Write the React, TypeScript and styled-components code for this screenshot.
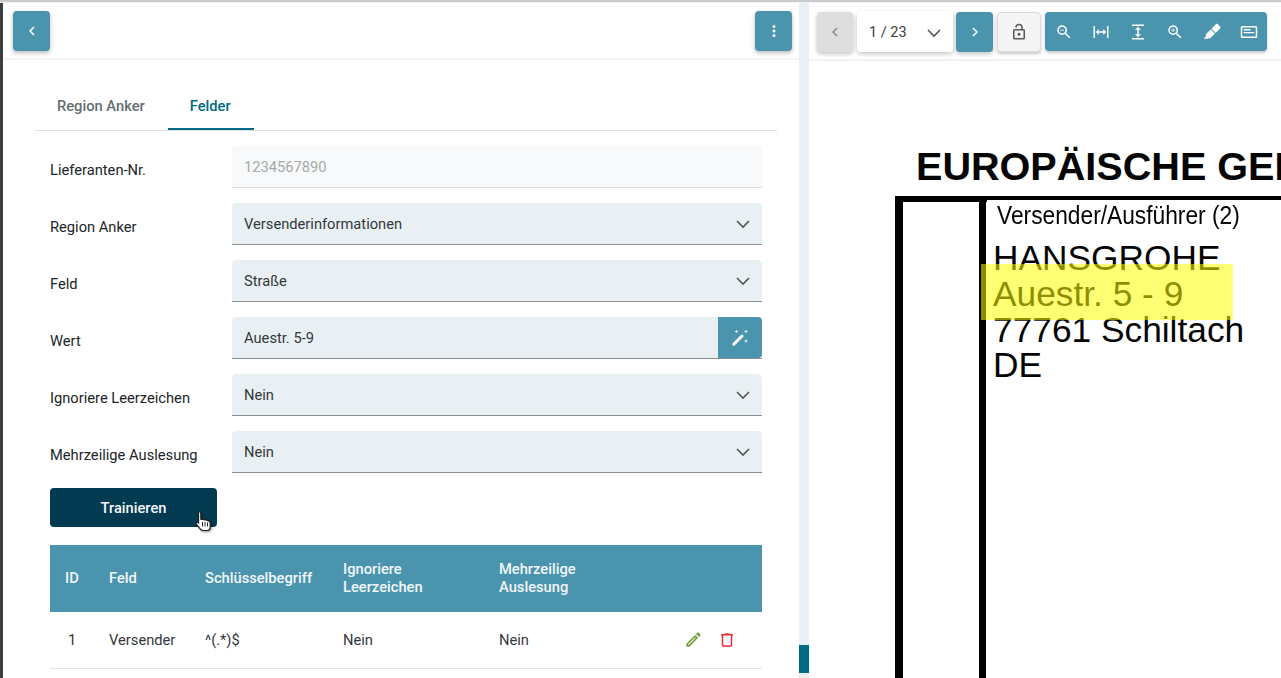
import styled, { createGlobalStyle } from 'styled-components';

const teal = '#4a94ae';
const fieldBg = '#e9f0f4';

const GlobalStyle = createGlobalStyle`
  html, body {
    margin: 0;
    height: 100%;
    overflow: hidden;
    background: #fff;
  }
  * {
    box-sizing: border-box;
  }
`;

const Screen = styled.div`
  width: 1281px;
  height: 678px;
  display: flex;
  flex-direction: column;
  overflow: hidden;
  font-family: Roboto, "Liberation Sans", sans-serif;
  font-size: 14.7px;
  color: #212529;
`;

const TopLine = styled.div`
  height: 3px;
  flex: none;
  background: linear-gradient(#c9cccc 0, #c9cccc 2px, #f4f4f4 2px);
`;

const Main = styled.div`
  flex: 1;
  display: flex;
  min-height: 0;
`;

const EdgeBar = styled.div`
  width: 3px;
  flex: none;
  background: #3d3d3d;
`;

const LeftPane = styled.div`
  width: 796px;
  flex: none;
  display: flex;
  flex-direction: column;
`;

const LeftHeader = styled.div`
  height: 57px;
  flex: none;
  padding: 8px 7px 0 10px;
  display: flex;
  justify-content: space-between;
  align-items: flex-start;
  border-bottom: 2px solid #f3f5f6;
`;

const SquareButton = styled.button`
  width: 37px;
  height: 40px;
  padding: 0;
  border: none;
  border-radius: 4px;
  background: ${teal};
  color: #fff;
  display: flex;
  align-items: center;
  justify-content: center;
  box-shadow: 0 2px 4px rgba(0, 0, 0, 0.28);
`;

const Content = styled.div`
  padding: 12px 22px 0 32px;
`;

const Tabs = styled.div`
  height: 59px;
  display: flex;
  border-bottom: 1px solid #dee2e4;
`;

const Tab = styled.div<{ $active?: boolean }>`
  padding: 0 23px 0 22px;
  height: 58px;
  line-height: 69px;
  font-weight: 500;
  color: ${(p) => (p.$active ? '#006b85' : '#666d70')};
  border-bottom: ${(p) => (p.$active ? '2px solid #006b85' : 'none')};
`;

const FormArea = styled.div`
  padding: 15px 15px 0;
`;

const Row = styled.div`
  display: flex;
  align-items: center;
  height: 42px;
  margin-bottom: 15px;
`;

const Label = styled.div`
  width: 182px;
  flex: none;
  padding-top: 5px;
  color: #212529;
`;

const Field = styled.div<{ $readonly?: boolean }>`
  flex: 1;
  height: 42px;
  padding: 0 0 0 12px;
  display: flex;
  align-items: center;
  justify-content: space-between;
  border-radius: 4px 4px 0 0;
  background: ${(p) => (p.$readonly ? '#f8f9fa' : fieldBg)};
  border-bottom: 1px solid ${(p) => (p.$readonly ? '#dcdfe1' : '#8c8f92')};
  color: ${(p) => (p.$readonly ? '#a6a9ab' : '#33383b')};
`;

const Chevron = styled.span`
  width: 38px;
  display: flex;
  justify-content: center;
  color: #555;
`;

const WandButton = styled.span`
  width: 44px;
  height: 41px;
  background: ${teal};
  border-radius: 0 4px 4px 0;
  color: #fff;
  display: flex;
  align-items: center;
  justify-content: center;
`;

const TrainWrap = styled.div`
  position: relative;
  width: 167px;
`;

const TrainButton = styled.button`
  width: 167px;
  height: 39px;
  border: none;
  border-radius: 4px;
  background: #023a51;
  color: #f2f6f8;
  font: 500 14.7px Roboto, sans-serif;
  display: block;
`;

const HandCursor = styled.svg`
  position: absolute;
  left: 145px;
  top: 23px;
  filter: drop-shadow(1px 1px 1px rgba(0, 0, 0, 0.45));
`;

const Table = styled.table`
  width: 712px;
  margin-top: 18px;
  border-collapse: collapse;
  table-layout: fixed;
`;

const HeadRow = styled.tr`
  height: 67px;
  background: ${teal};
  color: #f2f7f9;
`;

const HeadCell = styled.th<{ $w?: number }>`
  width: ${(p) => (p.$w ? `${p.$w}px` : 'auto')};
  padding: 0 0 2px 15px;
  text-align: left;
  font-weight: 500;
  line-height: 18px;
`;

const BodyRow = styled.tr`
  height: 56px;
  border-bottom: 1px solid #e3e4e5;
`;

const BodyCell = styled.td<{ $indent?: number }>`
  padding: 0 0 0 ${(p) => p.$indent ?? 15}px;
  color: #33383b;
`;

const Actions = styled.div`
  display: flex;
  justify-content: flex-end;
  gap: 15px;
  padding-right: 26px;
  align-items: center;
`;

const Splitter = styled.div`
  width: 10px;
  flex: none;
  background: ${fieldBg};
  display: flex;
  flex-direction: column;
  padding-top: 642px;
`;

const SplitterThumb = styled.div`
  height: 28px;
  background: #006b85;
`;

const RightPane = styled.div`
  flex: 1;
  min-width: 0;
  display: flex;
  flex-direction: column;
`;

const Toolbar = styled.div`
  height: 58px;
  flex: none;
  padding: 9px 0 0 8px;
  display: flex;
  align-items: flex-start;
  border-bottom: 2px solid #eef3f5;
`;

const PageArrow = styled.button<{ $disabled?: boolean }>`
  width: ${(p) => (p.$disabled ? 36 : 37)}px;
  height: 40px;
  padding: 0;
  border: none;
  border-radius: 4px;
  display: flex;
  align-items: center;
  justify-content: center;
  background: ${(p) => (p.$disabled ? '#dedede' : teal)};
  color: ${(p) => (p.$disabled ? '#8a8a8a' : '#fff')};
  box-shadow: 0 2px 4px rgba(0, 0, 0, 0.24);
`;

const PageSelect = styled.div`
  width: 96px;
  height: 41px;
  margin: -1px 3px 0 4px;
  padding: 2px 0 0 12px;
  display: flex;
  align-items: center;
  justify-content: space-between;
  background: #fff;
  border-radius: 4px;
  color: #3b3b3b;
  font-size: 14.5px;
  box-shadow: 0 2px 4px rgba(0, 0, 0, 0.22);
`;

const LockButton = styled.button`
  width: 44px;
  height: 40px;
  margin: 0 4px;
  padding: 0;
  border: 1px solid #dcdcdc;
  border-radius: 4px;
  background: #f5f5f5;
  color: #5a5a5a;
  display: flex;
  align-items: center;
  justify-content: center;
  box-shadow: 0 2px 3px rgba(0, 0, 0, 0.22);
`;

const ToolGroup = styled.div`
  width: 222px;
  height: 39px;
  display: grid;
  grid-template-columns: repeat(6, 37px);
  background: ${teal};
  border-radius: 4px;
  color: #fff;
  box-shadow: 0 2px 3px rgba(0, 0, 0, 0.22);
`;

const ToolIcon = styled.span`
  display: flex;
  align-items: center;
  justify-content: center;
`;

const DocCanvas = styled.div`
  position: relative;
  flex: 1;
  overflow: hidden;
  background: #fff;
  font-family: "Liberation Sans", Arial, sans-serif;
  color: #050505;
`;

// pdf page content, everything here sits at its place on the scanned page
const DocTitle = styled.div`
  position: absolute;
  left: 107px;
  top: 83px;
  font-size: 39.6px;
  line-height: 44px;
  font-weight: 700;
  white-space: nowrap;
`;

const DocLine = styled.div<{ $l: number; $t: number; $w: number; $h: number }>`
  position: absolute;
  left: ${(p) => p.$l}px;
  top: ${(p) => p.$t}px;
  width: ${(p) => p.$w}px;
  height: ${(p) => p.$h}px;
  background: #000;
`;

const DocCaption = styled.div`
  position: absolute;
  left: 188px;
  top: 139px;
  font-size: 25px;
  line-height: 30px;
  white-space: nowrap;
  transform: scaleX(0.91);
  transform-origin: left top;
`;

const DocAddress = styled.div`
  position: absolute;
  left: 184px;
  top: 179px;
  font-size: 35.3px;
  line-height: 35.8px;
  white-space: nowrap;
`;

const Highlight = styled.div`
  position: absolute;
  left: 172px;
  top: 203px;
  width: 252px;
  height: 56px;
  background: rgba(255, 255, 0, 0.55);
`;

const ChevronDown = () => (
  <svg width="18" height="18" viewBox="0 0 18 18" fill="none" stroke="currentColor" strokeWidth="1.6">
    <path d="M3 6l6 6 6-6" />
  </svg>
);

const WandIcon = () => (
  <svg width="17" height="16" viewBox="0 0 17 16" fill="none" stroke="currentColor">
    <path d="M1.8 14.2L10 6" strokeWidth="3" strokeLinecap="round" />
    <path d="M4.5 0v3M3 1.5h3M14 0v3M12.5 1.5h3M14 9.5v3M12.5 11h3" strokeWidth="1" opacity="0.85" />
  </svg>
);

const MdiIcon = ({ d, size = 18, color }: { d: string; size?: number; color?: string }) => (
  <svg width={size} height={size} viewBox="0 0 24 24" fill={color || 'currentColor'}>
    <path d={d} />
  </svg>
);

const paths = {
  left: 'M15.41,16.58L10.83,12L15.41,7.41L14,6L8,12L14,18L15.41,16.58Z',
  right: 'M8.59,16.58L13.17,12L8.59,7.41L10,6L16,12L10,18L8.59,16.58Z',
  dots: 'M12,16A2,2 0 0,1 14,18A2,2 0 0,1 12,20A2,2 0 0,1 10,18A2,2 0 0,1 12,16M12,10A2,2 0 0,1 14,12A2,2 0 0,1 12,14A2,2 0 0,1 10,12A2,2 0 0,1 12,10M12,4A2,2 0 0,1 14,6A2,2 0 0,1 12,8A2,2 0 0,1 10,6A2,2 0 0,1 12,4Z',
  lock: 'M18,20V10H6V20H18M18,8A2,2 0 0,1 20,10V20A2,2 0 0,1 18,22H6C4.89,22 4,21.1 4,20V10A2,2 0 0,1 6,8H15V6A3,3 0 0,0 12,3A3,3 0 0,0 9,6H7A5,5 0 0,1 12,1A5,5 0 0,1 17,6V8H18M12,17A2,2 0 0,1 10,15A2,2 0 0,1 12,13A2,2 0 0,1 14,15A2,2 0 0,1 12,17Z',
  zoomOut: 'M15.5,14H14.71L14.43,13.73C15.41,12.59 16,11.11 16,9.5A6.5,6.5 0 0,0 9.5,3A6.5,6.5 0 0,0 3,9.5A6.5,6.5 0 0,0 9.5,16C11.11,16 12.59,15.41 13.73,14.43L14,14.71V15.5L19,20.49L20.49,19L15.5,14M9.5,14C7,14 5,12 5,9.5C5,7 7,5 9.5,5C12,5 14,7 14,9.5C14,12 12,14 9.5,14M7,9H12V10H7V9Z',
  zoomIn: 'M15.5,14H14.71L14.43,13.73C15.41,12.59 16,11.11 16,9.5A6.5,6.5 0 0,0 9.5,3A6.5,6.5 0 0,0 3,9.5A6.5,6.5 0 0,0 9.5,16C11.11,16 12.59,15.41 13.73,14.43L14,14.71V15.5L19,20.49L20.49,19L15.5,14M9.5,14C7,14 5,12 5,9.5C5,7 7,5 9.5,5C12,5 14,7 14,9.5C14,12 12,14 9.5,14M12,10H10V12H9V10H7V9H9V7H10V9H12V10Z',
  fitWidth: 'M9,11H15V8L19,12L15,16V13H9V16L5,12L9,8V11M2,20V4H4V20H2M20,20V4H22V20H20Z',
  fitHeight: 'M13,9V15H16L12,19L8,15H11V9H8L12,5L16,9H13M4,2H20V4H4V2M4,20H20V22H4V20Z',
  marker: 'M18.5,1.15C17.97,1.15 17.46,1.34 17.07,1.73L11.26,7.55L16.91,13.2L22.73,7.39C23.5,6.61 23.5,5.35 22.73,4.56L19.89,1.73C19.5,1.34 19,1.15 18.5,1.15M10.3,8.5L4.34,14.46C3.56,15.24 3.56,16.5 4.36,17.31C3.14,18.54 1.9,19.77 0.67,21H6.33L7.19,20.14C7.97,20.9 9.22,20.89 10,20.11L15.95,14.16',
  card: 'M21,4H3A2,2 0 0,0 1,6V18A2,2 0 0,0 3,20H21A2,2 0 0,0 23,18V6A2,2 0 0,0 21,4M21,18H3V6H21V18M5,8H14V10H5V8M5,12H19V13.5H5V12Z',
  pencil: 'M14.06,9L15,9.94L5.92,19H5V18.08L14.06,9M17.66,3C17.41,3 17.15,3.1 16.96,3.29L15.13,5.12L18.88,8.87L20.71,7.04C21.1,6.65 21.1,6 20.71,5.63L18.37,3.29C18.17,3.09 17.92,3 17.66,3M14.06,6.19L3,17.25V21H6.75L17.81,9.94L14.06,6.19Z',
  trash: 'M9,3V4H4V6H5V19A2,2 0 0,0 7,21H17A2,2 0 0,0 19,19V6H20V4H15V3H9M7,6H17V19H7V6Z',
};

const selects = [
  { label: 'Region Anker', value: 'Versenderinformationen' },
  { label: 'Feld', value: 'Straße' },
];

const flags = [
  { label: 'Ignoriere Leerzeichen', value: 'Nein' },
  { label: 'Mehrzeilige Auslesung', value: 'Nein' },
];

const toolIcons = [paths.zoomOut, paths.fitWidth, paths.fitHeight, paths.zoomIn, paths.marker, paths.card];

const SelectRow = ({ label, value }: { label: string; value: string }) => (
  <Row>
    <Label>{label}</Label>
    <Field>
      {value}
      <Chevron>
        <ChevronDown />
      </Chevron>
    </Field>
  </Row>
);

const App = () => {
  return (
    <Screen>
      <GlobalStyle />
      <TopLine />
      <Main>
        <EdgeBar />
        <LeftPane>
          <LeftHeader>
            <SquareButton>
              <MdiIcon d={paths.left} />
            </SquareButton>
            <SquareButton>
              <MdiIcon d={paths.dots} />
            </SquareButton>
          </LeftHeader>
          <Content>
            <Tabs>
              <Tab>Region Anker</Tab>
              <Tab $active>Felder</Tab>
            </Tabs>
            <FormArea>
              <Row>
                <Label>Lieferanten-Nr.</Label>
                <Field $readonly>1234567890</Field>
              </Row>
              {selects.map((s) => (
                <SelectRow key={s.label} label={s.label} value={s.value} />
              ))}
              <Row>
                <Label>Wert</Label>
                <Field>
                  Auestr. 5-9
                  <WandButton>
                    <WandIcon />
                  </WandButton>
                </Field>
              </Row>
              {flags.map((s) => (
                <SelectRow key={s.label} label={s.label} value={s.value} />
              ))}
              <TrainWrap>
                <TrainButton>Trainieren</TrainButton>
                <HandCursor width="18" height="21" viewBox="0 0 18 21">
                  <path
                    d="M4.2 1c1 0 1.6.7 1.6 1.6v5.6l6.2 1c2 .4 3.2 1.2 3.2 3v3.6c0 2-1.2 3.7-3.2 3.7H8c-1.1 0-1.9-.4-2.6-1.3L1.2 13c-.8-1.1.5-2.4 1.6-1.6l.8.7V2.6C2.6 1.7 3.2 1 4.2 1z"
                    fill="#fff"
                    stroke="#222"
                    strokeWidth="1.2"
                  />
                  <path d="M7.5 11v4.5M10 11v4.5M12.5 11.5v4" stroke="#222" strokeWidth="1" />
                </HandCursor>
              </TrainWrap>
              <Table>
                <thead>
                  <HeadRow>
                    <HeadCell $w={44}>ID</HeadCell>
                    <HeadCell $w={96}>Feld</HeadCell>
                    <HeadCell $w={138}>Schlüsselbegriff</HeadCell>
                    <HeadCell $w={156}>
                      Ignoriere
                      <br />
                      Leerzeichen
                    </HeadCell>
                    <HeadCell $w={133}>
                      Mehrzeilige
                      <br />
                      Auslesung
                    </HeadCell>
                    <HeadCell />
                  </HeadRow>
                </thead>
                <tbody>
                  <BodyRow>
                    <BodyCell $indent={18}>1</BodyCell>
                    <BodyCell>Versender</BodyCell>
                    <BodyCell>^(.*)$</BodyCell>
                    <BodyCell>Nein</BodyCell>
                    <BodyCell>Nein</BodyCell>
                    <BodyCell>
                      <Actions>
                        <MdiIcon d={paths.pencil} size={19} color="#6f9f3a" />
                        <MdiIcon d={paths.trash} size={18} color="#e5303a" />
                      </Actions>
                    </BodyCell>
                  </BodyRow>
                </tbody>
              </Table>
            </FormArea>
          </Content>
        </LeftPane>
        <Splitter>
          <SplitterThumb />
        </Splitter>
        <RightPane>
          <Toolbar>
            <PageArrow $disabled>
              <MdiIcon d={paths.left} />
            </PageArrow>
            <PageSelect>
              1 / 23
              <Chevron>
                <ChevronDown />
              </Chevron>
            </PageSelect>
            <PageArrow>
              <MdiIcon d={paths.right} />
            </PageArrow>
            <LockButton>
              <MdiIcon d={paths.lock} />
            </LockButton>
            <ToolGroup>
              {toolIcons.map((d) => (
                <ToolIcon key={d}>
                  <MdiIcon d={d} />
                </ToolIcon>
              ))}
            </ToolGroup>
          </Toolbar>
          <DocCanvas>
            <DocTitle>EUROPÄISCHE GEMEINSCHAFT</DocTitle>
            <DocLine $l={86} $t={135} $w={400} $h={4} />
            <DocLine $l={86} $t={135} $w={92} $h={6} />
            <DocLine $l={86} $t={135} $w={8} $h={500} />
            <DocLine $l={170} $t={135} $w={7} $h={500} />
            <DocCaption>Versender/Ausführer (2)</DocCaption>
            <DocAddress>
              HANSGROHE
              <br />
              Auestr. 5 - 9
              <br />
              77761 Schiltach
              <br />
              DE
            </DocAddress>
            <Highlight />
          </DocCanvas>
        </RightPane>
      </Main>
    </Screen>
  );
};

export default App;
